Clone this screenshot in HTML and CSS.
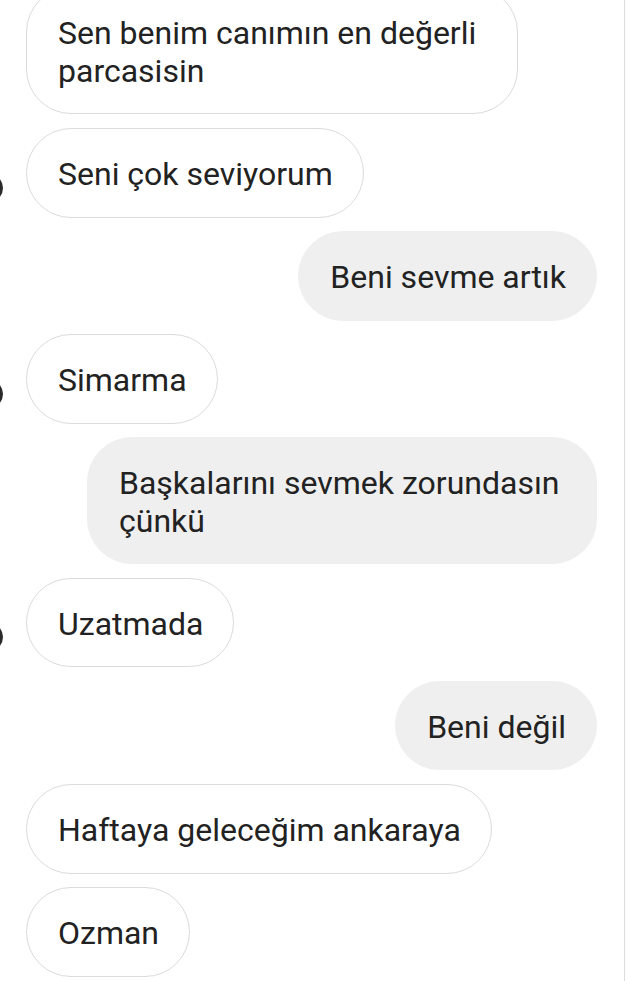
FILE: index.html
```html
<!DOCTYPE html>
<html lang="tr">
<head>
<meta charset="utf-8">
<title>Mesajlar</title>
<link rel="stylesheet" href="styles.css">
</head>
<body>
<div class="panel">
  <div class="thread">
    <div class="row in"><div class="bubble">Sen benim canımın en değerli parcasisin</div></div>
    <div class="row in"><span class="avatar"></span><div class="bubble">Seni çok seviyorum</div></div>
    <div class="row out"><div class="bubble">Beni sevme artık</div></div>
    <div class="row in"><span class="avatar"></span><div class="bubble">Simarma</div></div>
    <div class="row out"><div class="bubble">Başkalarını sevmek zorundasın çünkü</div></div>
    <div class="row in"><span class="avatar"></span><div class="bubble">Uzatmada</div></div>
    <div class="row out"><div class="bubble">Beni değil</div></div>
    <div class="row in"><div class="bubble">Haftaya geleceğim ankaraya</div></div>
    <div class="row in"><div class="bubble">Ozman</div></div>
  </div>
</div>
</body>
</html>
```

FILE: styles.css
```css
html, body {
  margin: 0;
  padding: 0;
  background: #ffffff;
  height: 100%;
  overflow: hidden;
}

body {
  font-family: Roboto, "Noto Sans", "Liberation Sans", sans-serif;
  color: #222222;
}

.panel {
  width: 625px;
  height: 100%;
  border-right: 1px solid #dcdcdc;
  box-sizing: border-box;
  overflow: hidden;
}

.thread {
  display: flex;
  flex-direction: column;
  gap: 13.6px;
  margin-top: -12.6px;
  padding: 0 27px 0 26px;
}

.row {
  display: flex;
  align-items: flex-end;
}

.row.out {
  justify-content: flex-end;
}

.bubble {
  box-sizing: border-box;
  font-size: 32px;
  line-height: 37.5px;
  padding: 27px 30px 23px 31px;
  border: 1px solid #dbdbdb;
  border-radius: 45px;
  background: #ffffff;
  max-width: 492px;
}

.row.out .bubble {
  background: #efefef;
  border-color: #efefef;
  max-width: 510px;
}

.avatar {
  flex: none;
  width: 28px;
  height: 28px;
  border-radius: 50%;
  background: #2a2a2a;
  margin-left: -51px;
  margin-right: 23px;
  margin-bottom: 16px;
}
```
